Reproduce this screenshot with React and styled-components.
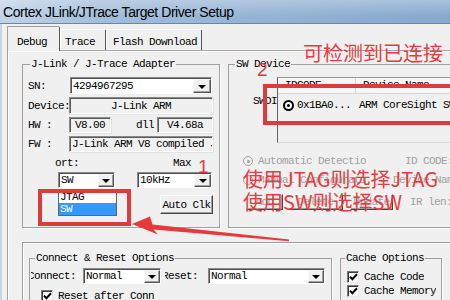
import React from 'react'
import styled, { createGlobalStyle } from 'styled-components'

const mono = `"Liberation Mono", "DejaVu Sans Mono", monospace`
const cjk = `"Noto Sans CJK SC", "Noto Sans", sans-serif`
const red = '#de3b3d'

const GlobalStyle = createGlobalStyle`
  html, body { margin: 0; padding: 0; background: #f0f0f0; }
  body { width: 450px; height: 300px; overflow: hidden; }
  * { box-sizing: border-box; }
`

const Window = styled.div`
  position: relative;
  width: 450px;
  height: 300px;
  overflow: hidden;
  background: #f0f0f0;
  font-family: ${mono};
  font-size: 11px;
  letter-spacing: -0.6px;
  color: #000;
`

const TitleBar = styled.div`
  height: 24px;
  display: flex;
  align-items: center;
  padding-left: 3px;
  border-bottom: 1px solid #6a87ab;
  background: linear-gradient(180deg, rgba(255, 255, 255, 0.28), rgba(255, 255, 255, 0) 70%),
    linear-gradient(90deg, #c2d4e8 0%, #a3bedb 22%, #93b2d4 60%, #87a9cf 100%);
  font-family: "Liberation Sans", Arial, sans-serif;
  font-size: 14px;
  letter-spacing: -0.45px;
  white-space: nowrap;
`

const Client = styled.div`
  padding: 2px 0 0 5px;
  border-left: 2px solid #c5d3e2;
  height: 276px;
`

const TabStrip = styled.div`
  display: flex;
  align-items: flex-end;
  height: 24px;
  position: relative;
  z-index: 1;
`

const Tab = styled.div`
  width: ${p => p.$w}px;
  height: ${p => (p.$active ? 25 : 21)}px;
  margin-bottom: ${p => (p.$active ? -1 : 0)}px;
  padding: 0 0 ${p => (p.$active ? 3 : 2)}px ${p => p.$pad}px;
  display: flex;
  align-items: flex-end;
  background: #f0f0f0;
  border-top: 1px solid ${p => (p.$active ? '#a0a0a0' : '#fff')};
  border-left: 1px solid ${p => (p.$active ? '#a0a0a0' : '#fff')};
  border-right: 1px solid #555;
  border-top-right-radius: 2px;
  white-space: nowrap;
`

const TabPage = styled.div`
  height: 260px;
  border-top: 1px solid #a9a9a9;
  border-left: 1px solid #a0a0a0;
  box-shadow: inset 1px 1px 0 #fff;
  padding: 7px 0 0 14px;
`

const TopRow = styled.div`
  display: flex;
  gap: 8px;
  height: 170px;
`

const Group = styled.fieldset`
  margin: 0;
  padding: ${p => p.$pad || '0 0 0 5px'};
  width: ${p => p.$w}px;
  height: ${p => p.$h}px;
  min-width: 0;
  flex-shrink: 0;
  border: 1px solid #a0a0a0;
  box-shadow: 1px 1px 0 #fff;
`

const Legend = styled.legend`
  padding: 0 1px;
  margin-left: ${p => p.$ml ?? 2}px;
  height: 12px;
  line-height: 12px;
  white-space: nowrap;
`

const InfoGrid = styled.div`
  display: grid;
  grid-template-columns: 41px 144px;
  grid-template-rows: 17px 17px 16px 16px;
  row-gap: 3px;
  padding-top: 7px;
  align-items: center;
`

const FieldLabel = styled.span`
  line-height: 12px;
  white-space: nowrap;
`

const Sunken = styled.div`
  height: 100%;
  width: ${p => (p.$w ? `${p.$w}px` : '100%')};
  margin-left: ${p => p.$ml || 0}px;
  display: flex;
  align-items: center;
  justify-content: ${p => (p.$center ? 'center' : 'flex-start')};
  padding-left: ${p => (p.$center ? 0 : 2)}px;
  background: ${p => (p.$white ? '#fff' : '#f0f0f0')};
  border: 1px solid;
  border-color: #8a8a8a #fff #fff #8a8a8a;
  box-shadow: inset 1px 1px 0 #5a5a5a, 1px 1px 0 #e3e3e3;
  overflow: hidden;
  white-space: nowrap;
  line-height: 12px;
`

const ComboBox = styled.div`
  position: relative;
  width: ${p => p.$w}px;
  height: ${p => p.$h || 16}px;
  margin-left: ${p => p.$ml || 0}px;
  display: flex;
  align-items: stretch;
  background: #fff;
  border: 1px solid;
  border-color: #8a8a8a #fff #fff #8a8a8a;
  box-shadow: inset 1px 1px 0 #505050;
  flex-shrink: 0;
`

const ComboText = styled.span`
  flex: 1;
  padding: 0 0 0 2px;
  display: flex;
  align-items: center;
  line-height: 12px;
  white-space: nowrap;
  overflow: hidden;
`

const DropButton = styled.span`
  width: ${p => p.$w || 16}px;
  margin: 1px 0 0 0;
  display: flex;
  align-items: center;
  justify-content: center;
  background: #f0f0f0;
  border: 1px solid;
  border-color: #f8f8f8 #555 #555 #f8f8f8;
  box-shadow: inset -1px -1px 0 #a0a0a0;
  &::after {
    content: '';
    border-left: 4px solid transparent;
    border-right: 4px solid transparent;
    border-top: 4px solid #000;
    margin-top: 1px;
  }
`

const HwCell = styled.div`
  display: flex;
  height: 100%;
`

const DllLabel = styled.span`
  width: 46px;
  padding-left: 25px;
  align-self: center;
  line-height: 12px;
`

const PortRow = styled.div`
  display: flex;
  gap: 22px;
  padding: 5px 0 0 30px;
`

const PortCol = styled.div`
  position: relative;
  display: flex;
  flex-direction: column;
  width: ${p => p.$w}px;
`

const SmallLabel = styled.span`
  height: 12px;
  line-height: 12px;
  margin: 0 0 3px ${p => p.$ml || 0}px;
  white-space: nowrap;
`

const PushButton = styled.div`
  width: ${p => p.$w}px;
  height: ${p => p.$h || 19}px;
  margin: ${p => p.$m || 0};
  display: flex;
  align-items: center;
  justify-content: center;
  background: #f0f0f0;
  border: 1px solid;
  border-color: #fff #444 #444 #fff;
  box-shadow: inset -1px -1px 0 #a0a0a0;
  color: ${p => (p.$disabled ? '#a0a0a0' : '#000')};
  white-space: nowrap;
  flex-shrink: 0;
`

const DropList = styled.div`
  position: absolute;
  left: 0;
  top: 33px;
  width: 59px;
  background: #fff;
  border: 1px solid #646464;
  z-index: 2;
`

const DropItem = styled.div`
  height: 12px;
  line-height: 12px;
  padding-left: 1px;
  background: ${p => (p.$sel ? '#3399ff' : '#fff')};
  color: ${p => (p.$sel ? '#fff' : '#000')};
`

const SwBody = styled.div`
  padding-left: 8px;
`

const ListRow = styled.div`
  display: flex;
  padding: 7px 0 0 10px;
`

const PortName = styled.span`
  width: 29px;
  padding-top: 18px;
  line-height: 12px;
  overflow: hidden;
  white-space: nowrap;
`

const DeviceList = styled.div`
  width: 200px;
  height: 66px;
  border-left: 1px solid #646464;
  border-top: 1px solid #9a9a9a;
  border-bottom: 1px solid #d8d8d8;
  background: #f0f0f0;
`

const ListHeader = styled.div`
  display: flex;
  height: 16px;
  border-bottom: 1px solid #d5d5d5;
  background: #f7f7f7;
`

const HeadCell = styled.span`
  width: ${p => p.$w}px;
  padding-left: 7px;
  line-height: 15px;
  border-right: 1px solid #d5d5d5;
  white-space: nowrap;
  overflow: hidden;
`

const ListItem = styled.div`
  display: flex;
  align-items: center;
  height: 14px;
  margin-top: 4px;
  padding-left: 5px;
  white-space: nowrap;
`

const Radio = styled.span`
  width: ${p => p.$size || 11}px;
  height: ${p => p.$size || 11}px;
  border-radius: 50%;
  border: ${p => (p.$disabled ? '1px solid #a0a0a0' : '2px solid #000')};
  background: ${p => (p.$disabled ? '#f0f0f0' : '#fff')};
  display: flex;
  align-items: center;
  justify-content: center;
  flex-shrink: 0;
  &::after {
    content: '';
    width: 3px;
    height: 3px;
    border-radius: 50%;
    background: ${p => (p.$checked ? (p.$disabled ? '#a0a0a0' : '#000') : 'transparent')};
  }
`

const ItemText = styled.span`
  width: ${p => p.$w}px;
  padding-left: ${p => p.$pl || 0}px;
`

const OptRow = styled.div`
  display: flex;
  align-items: center;
  height: ${p => p.$h || 12}px;
  margin-top: ${p => p.$mt}px;
  color: #a0a0a0;
  white-space: nowrap;
`

const OptLabel = styled.span`
  width: ${p => p.$w}px;
  margin-left: ${p => p.$ml || 0}px;
  overflow: hidden;
  line-height: 12px;
  flex-shrink: 0;
`

const OuterBox = styled.div`
  margin-top: 14px;
  height: 80px;
  border-top: 1px solid #a0a0a0;
  border-left: 1px solid #a0a0a0;
  box-shadow: inset 1px 1px 0 #fff;
  padding: 9px 0 0 6px;
  display: flex;
  gap: 8px;
`

const ConnectRow = styled.div`
  display: flex;
  height: 17px;
  margin-top: 4px;
`

const ClipLabel = styled.span`
  width: ${p => p.$w}px;
  margin-left: ${p => p.$ml || 0}px;
  overflow: hidden;
  white-space: nowrap;
  text-indent: -3px;
  line-height: 17px;
  flex-shrink: 0;
`

const CheckRow = styled.div`
  display: flex;
  align-items: center;
  height: ${p => p.$h || 14}px;
  margin-top: ${p => p.$mt || 0}px;
  padding-left: ${p => p.$pl || 0}px;
  white-space: nowrap;
`

const CheckBox = styled.span`
  width: ${p => p.$size}px;
  height: ${p => p.$size}px;
  margin-right: ${p => p.$gap}px;
  background: #fff;
  border: 1px solid;
  border-color: #7a7a7a #e8e8e8 #e8e8e8 #7a7a7a;
  box-shadow: inset 1px 1px 0 #3a3a3a;
  display: flex;
  align-items: center;
  justify-content: center;
  flex-shrink: 0;
`

const CheckText = styled.span`
  width: ${p => p.$w || 'auto'};
  overflow: hidden;
  line-height: 12px;
`

const CacheBody = styled.div`
  padding: 6px 0 0 2px;
`

const Note = styled.span`
  position: absolute;
  left: ${p => p.$x}px;
  top: ${p => p.$y}px;
  font-family: ${cjk};
  font-size: ${p => p.$size || 20}px;
  line-height: 1;
  letter-spacing: 0;
  color: #e63c40;
  white-space: nowrap;
  z-index: 5;
`

const Digit = styled(Note)`
  font-family: "Liberation Sans", Arial, sans-serif;
  color: ${red};
`

const RedBox = styled.div`
  position: absolute;
  left: ${p => p.$x}px;
  top: ${p => p.$y}px;
  width: ${p => p.$w}px;
  height: ${p => p.$h}px;
  border: 4px solid ${red};
  z-index: 4;
`

const ArrowLayer = styled.svg`
  position: absolute;
  left: 0;
  top: 0;
  z-index: 4;
  pointer-events: none;
`

const Check = () => (
  <svg width="9" height="8" viewBox="0 0 9 8">
    <path d="M1 3.6 L3.4 6.2 L8 1.2" fill="none" stroke="#000" strokeWidth="2" />
  </svg>
)

const Combo = ({ w, text, btn }) => (
  <ComboBox $w={w}>
    <ComboText>{text}</ComboText>
    <DropButton $w={btn} />
  </ComboBox>
)

export default function App() {
  return (
    <>
      <GlobalStyle />
      <Window>
        <TitleBar>Cortex JLink/JTrace Target Driver Setup</TitleBar>
        <Client>
          <TabStrip>
            <Tab $active $w={53} $pad={9}>Debug</Tab>
            <Tab $w={46} $pad={4}>Trace</Tab>
            <Tab $w={96} $pad={6}>Flash Download</Tab>
          </TabStrip>
          <TabPage>
            <TopRow>
              <Group $w={198} $h={170}>
                <Legend>J-Link / J-Trace Adapter</Legend>
                <InfoGrid>
                  <FieldLabel>SN:</FieldLabel>
                  <ComboBox $w={142} $h={17} $ml={1}>
                    <ComboText>4294967295</ComboText>
                    <DropButton $w={18} />
                  </ComboBox>
                  <FieldLabel>Device:</FieldLabel>
                  <Sunken $center>J-Link ARM</Sunken>
                  <FieldLabel>HW :</FieldLabel>
                  <HwCell>
                    <Sunken $w={42} $center>V8.00</Sunken>
                    <DllLabel>dll</DllLabel>
                    <Sunken $w={56} $center>V4.68a</Sunken>
                  </HwCell>
                  <FieldLabel>FW :</FieldLabel>
                  <Sunken>J-Link ARM V8 compiled Jul 17 2012</Sunken>
                </InfoGrid>
                <PortRow>
                  <PortCol $w={57}>
                    <SmallLabel $ml={-3}>ort:</SmallLabel>
                    <Combo w={57} text="SW" btn={16} />
                    <DropList>
                      <DropItem>JTAG</DropItem>
                      <DropItem $sel>SW</DropItem>
                    </DropList>
                  </PortCol>
                  <PortCol $w={75}>
                    <SmallLabel $ml={36}>Max</SmallLabel>
                    <Combo w={75} text="10kHz" btn={17} />
                    <PushButton $w={53} $m="7px 0 0 23px">Auto Clk</PushButton>
                  </PortCol>
                </PortRow>
              </Group>

              <Group $w={250} $h={170} $pad="0 0 0 6px">
                <Legend $ml={0}>SW Device</Legend>
                <SwBody>
                  <ListRow>
                    <PortName>SWDIO</PortName>
                    <DeviceList>
                      <ListHeader>
                        <HeadCell $w={78}>IDCODE</HeadCell>
                        <HeadCell $w={121}>Device Name</HeadCell>
                      </ListHeader>
                      <ListItem>
                        <Radio $checked />
                        <ItemText $w={65} $pl={3}>0x1BA0...</ItemText>
                        <ItemText>ARM CoreSight SW-DP</ItemText>
                      </ListItem>
                    </DeviceList>
                  </ListRow>
                  <OptRow $mt={12}>
                    <Radio $disabled $checked $size={10} />
                    <OptLabel $w={108} $ml={5}>Automatic Detection</OptLabel>
                    <OptLabel $w={60} $ml={39}>ID CODE:</OptLabel>
                  </OptRow>
                  <OptRow $mt={7}>
                    <Radio $disabled $size={10} />
                    <OptLabel $w={108} $ml={5}>Manual Configuration</OptLabel>
                    <OptLabel $w={72} $ml={27}>Device Name:</OptLabel>
                  </OptRow>
                  <OptRow $mt={8} $h={16}>
                    <PushButton $disabled $w={37} $h={16} $m="0 0 0 3px">Add</PushButton>
                    <PushButton $disabled $w={55} $h={16} $m="0 0 0 5px">Delete</PushButton>
                    <PushButton $disabled $w={43} $h={16} $m="0 0 0 7px">Update</PushButton>
                    <OptLabel $w={50} $ml={17}>IR len:</OptLabel>
                  </OptRow>
                </SwBody>
              </Group>
            </TopRow>

            <OuterBox>
              <Group $w={303} $h={70} $pad="0 0 0 1px">
                <Legend $ml={4}>Connect &amp; Reset Options</Legend>
                <ConnectRow>
                  <ClipLabel $w={52}>Connect:</ClipLabel>
                  <Combo w={78} text="Normal" btn={16} />
                  <ClipLabel $w={43} $ml={4}>Reset:</ClipLabel>
                  <Combo w={117} text="Normal" btn={16} />
                </ConnectRow>
                <CheckRow $mt={4} $pl={10}>
                  <CheckBox $size={12} $gap={5}><Check /></CheckBox>
                  <CheckText $w="96px">Reset after Connect</CheckText>
                </CheckRow>
              </Group>
              <Group $w={102} $h={70} $pad="0 0 0 4px">
                <Legend $ml={0}>Cache Options</Legend>
                <CacheBody>
                  <CheckRow>
                    <CheckBox $size={12} $gap={5}><Check /></CheckBox>
                    <CheckText>Cache Code</CheckText>
                  </CheckRow>
                  <CheckRow>
                    <CheckBox $size={12} $gap={5}><Check /></CheckBox>
                    <CheckText>Cache Memory</CheckText>
                  </CheckRow>
                </CacheBody>
              </Group>
            </OuterBox>
          </TabPage>
        </Client>

        <RedBox $x={263} $y={84} $w={200} $h={41} />
        <RedBox $x={38} $y={189} $w={93} $h={37} />
        <ArrowLayer width="450" height="300" viewBox="0 0 450 300">
          <polygon
            points="132,224 150,216.5 152.5,224.5 289,239.6 289,241.2 153.5,229.4 158,234.5"
            fill="#e5393a"
          />
        </ArrowLayer>
        <Note $x={303} $y={43}>可检测到已连接</Note>
        <Digit $x={257} $y={60} $size={19}>2</Digit>
        <Digit $x={198} $y={157} $size={19}>1</Digit>
        <Note $x={243} $y={169}>使用JTAG则选择JTAG</Note>
        <Note $x={243} $y={192}>使用SW则选择SW</Note>
      </Window>
    </>
  )
}
